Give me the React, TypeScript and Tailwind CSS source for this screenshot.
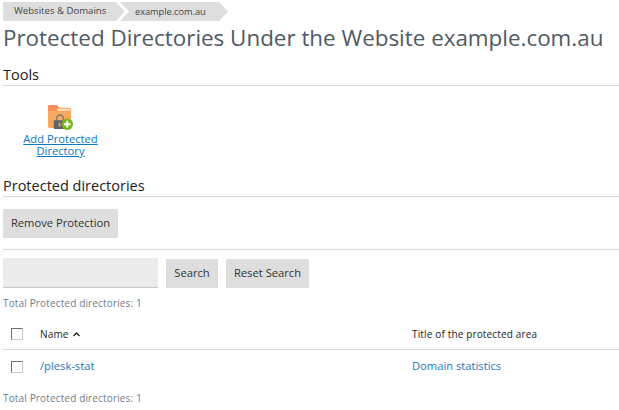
function FolderLockIcon() {
  return (
    <svg width="27" height="26" viewBox="0 0 28 27">
      <path d="M1 3a2 2 0 0 1 2-2h7l3 3h10a2 2 0 0 1 2 2v17a2 2 0 0 1-2 2H3a2 2 0 0 1-2-2z" fill="#f9a85f" />
      <path d="M1 3a2 2 0 0 1 2-2h7l3 3h-2l-2 3H1z" fill="#f58a5c" />
      <rect x="11" y="5" width="13" height="2" fill="#fde3c4" />
      <path d="M10 18v-3a3.5 3.5 0 0 1 7 0v3" fill="none" stroke="#7d7d7d" strokeWidth="1.6" />
      <rect x="7" y="17" width="13" height="9" rx="1" fill="#5f6468" />
      <rect x="12" y="19.5" width="2" height="4" fill="#d8a060" />
      <circle cx="21" cy="21" r="6" fill="#74b816" />
      <path d="M21 17.5v7M17.5 21h7" stroke="#fff" strokeWidth="2" />
    </svg>
  )
}

function Checkbox() {
  return <span className="block w-[12px] h-[12px] border border-[#6e6e6e] border-r-[#c8c8c8] border-b-[#c8c8c8] bg-white" />
}

function TotalLine() {
  return (
    <p className="text-[10px] leading-[14px] tracking-[0.15px] text-[#6f7d8c]">
      Total Protected directories: <span className="text-[#3f7fb5]">1</span>
    </p>
  )
}

function SectionTitle({ children }: { children: string }) {
  return (
    <h2 className="text-[14.5px] leading-[20px] text-[#222] border-b border-[#d9d9d9]">
      {children}
    </h2>
  )
}

export default function App() {
  return (
    <div className="w-[619px] h-[410px] overflow-hidden bg-white pl-[3px] font-['Open_Sans',sans-serif] text-[#333]">
      <div className="flex pt-[2px] h-[21px] text-[#444]">
        <span className="flex items-center h-[19px] w-[122px] pl-[11px] text-[9.6px] bg-[#dedede] [clip-path:polygon(0_0,calc(100%-9px)_0,100%_50%,calc(100%-9px)_100%,0_100%)]">
          Websites &amp; Domains
        </span>
        <span className="flex items-center h-[19px] w-[108px] -ml-[5px] pl-[15px] text-[9.2px] bg-[#dedede] [clip-path:polygon(0_0,calc(100%-9px)_0,100%_50%,calc(100%-9px)_100%,0_100%,9px_50%)]">
          example.com.au
        </span>
      </div>
      <h1 className="text-[22.4px] leading-[33px] text-[#505a64] whitespace-nowrap">
        Protected Directories Under the Website example.com.au
      </h1>
      <div className="mt-[11px]">
        <SectionTitle>Tools</SectionTitle>
      </div>
      <a className="flex flex-col items-center w-[115px] mt-[18px] text-[11.2px] leading-[12px] text-[#0b78c2] underline text-center">
        <FolderLockIcon />
        <span className="mt-[3px]">Add Protected<br />Directory</span>
      </a>
      <div className="mt-[19px]">
        <SectionTitle>Protected directories</SectionTitle>
      </div>
      <button className="block mt-[12px] h-[29px] w-[115px] bg-[#dedede] text-[11.2px] text-[#333]">
        Remove Protection
      </button>
      <div className="mt-[11px] border-t border-[#d9d9d9]" />
      <div className="flex items-end gap-[8px] mt-[8px]">
        <div className="w-[155px] h-[30px] bg-[#ebebeb] border-b border-[#c8c8c8]" />
        <button className="h-[29px] w-[52px] bg-[#dedede] text-[11.2px] text-[#333]">Search</button>
        <button className="h-[29px] w-[83px] bg-[#dedede] text-[11.2px] text-[#333]">Reset Search</button>
      </div>
      <div className="mt-[8px]">
        <TotalLine />
      </div>
      <div className="flex items-center h-[31px] mt-[9px] border-b border-[#d9d9d9] text-[10px] tracking-[0.15px] text-[#222]">
        <span className="w-[37px] pl-[8px]"><Checkbox /></span>
        <span className="w-[372px] flex items-center gap-[4px]">
          Name
          <svg width="7" height="5" viewBox="0 0 7 5"><path d="M0.5 4 3.5 1l3 3" fill="none" stroke="#222" strokeWidth="1.4" /></svg>
        </span>
        <span>Title of the protected area</span>
      </div>
      <div className="flex items-center h-[33px] text-[11.2px] text-[#1a78ba]">
        <span className="w-[37px] pl-[8px]"><Checkbox /></span>
        <span className="w-[372px]">/plesk-stat</span>
        <span>Domain statistics</span>
      </div>
      <div className="mt-[8px]">
        <TotalLine />
      </div>
    </div>
  )
}
